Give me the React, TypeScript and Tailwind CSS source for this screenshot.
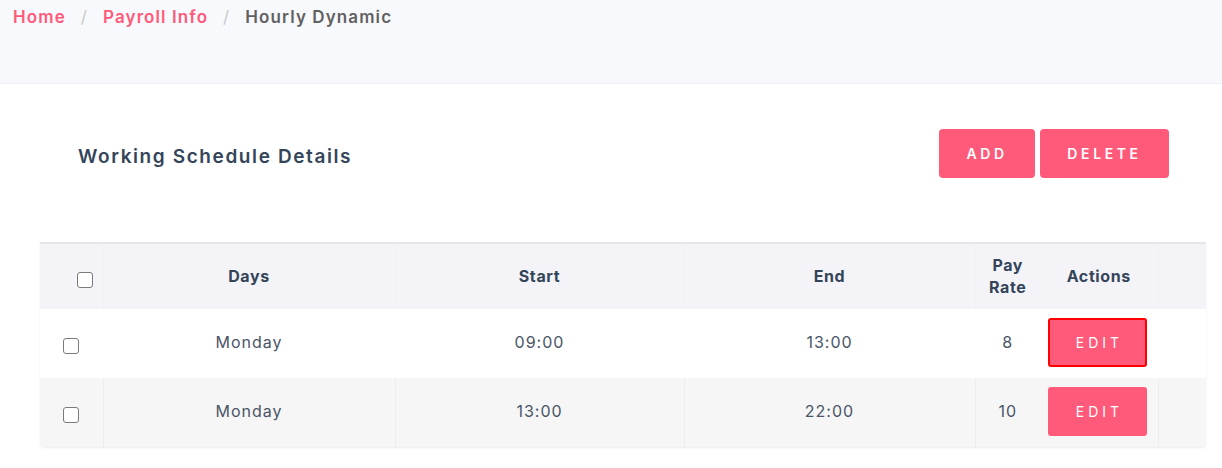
import React from "react";

const rows = [
  { day: "Monday", start: "09:00", end: "13:00", rate: "8", focused: true },
  { day: "Monday", start: "13:00", end: "22:00", rate: "10", focused: false },
];

const Checkbox = ({ className = "" }: { className?: string }) => (
  <span className={`inline-block w-4 h-4 rounded-[3px] border-[1.5px] border-[#7a7a7a] bg-white align-middle ${className}`} />
);

const App = () => {
  return (
    <div className="w-[1222px] h-[468px] bg-white overflow-hidden font-['Inter','Liberation_Sans',sans-serif]">
      <div className="h-[84px] bg-[#f8f9fc] border-b border-[#eeeff3] px-[13px] pt-[5px]">
        <nav className="flex items-center text-[17px] font-semibold tracking-[1.1px]">
          <span className="text-[#ff5a79]">Home</span>
          <span className="text-[#c9c9c9] font-normal mx-[15px]">/</span>
          <span className="text-[#ff5a79]">Payroll Info</span>
          <span className="text-[#c9c9c9] font-normal mx-[15px]">/</span>
          <span className="text-[#616161]">Hourly Dynamic</span>
        </nav>
      </div>

      <div className="flex items-center justify-between pl-[78px] pr-[53px] pt-[45px]">
        <h2 className="text-[19px] font-semibold text-[#34455a] tracking-[1.6px] mt-[7px]">Working Schedule Details</h2>
        <div className="flex gap-[5px]">
          <button className="w-[96px] h-[49px] rounded-[4px] bg-[#ff5a79] text-white text-[14px] font-semibold tracking-[3.6px]">ADD</button>
          <button className="w-[129px] h-[49px] rounded-[4px] bg-[#ff5a79] text-white text-[14px] font-semibold tracking-[3.6px]">DELETE</button>
        </div>
      </div>

      <div className="ml-[40px] mt-[64px] w-[1166px] border-t-2 border-[#e6e6ea] rounded-b-[4px] shadow-[0_1px_2px_rgba(0,0,0,0.08)] overflow-hidden">
        <table className="w-full table-fixed border-collapse text-[#34455a]">
          <colgroup>
            <col className="w-[63px]" />
            <col className="w-[292px]" />
            <col className="w-[289px]" />
            <col className="w-[291px]" />
            <col className="w-[65px]" />
            <col className="w-[118px]" />
            <col className="w-[48px]" />
          </colgroup>
          <thead>
            <tr className="bg-[#f4f4f8] h-[65px] text-[16px] font-semibold leading-[22px] tracking-[0.6px]">
              <th className="pl-[37px] text-left"><Checkbox className="mt-[4px]" /></th>
              <th className="border-l border-[#f0f0f5] pb-[2px]">Days</th>
              <th className="border-l border-[#f0f0f5] pb-[2px]">Start</th>
              <th className="border-l border-[#f0f0f5] pb-[2px]">End</th>
              <th className="border-l border-[#f0f0f5] px-[6px] pb-[2px]">Pay Rate</th>
              <th className="pb-[2px]">Actions</th>
              <th className="border-l border-[#f0f0f5]"></th>
            </tr>
          </thead>
          <tbody>
            {rows.map((r, i) => {
              const line = i % 2 === 1 ? "border-[#ededed]" : "border-white";
              return (
                <tr key={i} className={`h-[69px] text-[16px] text-[#4a5568] tracking-[1px] ${i % 2 === 1 ? "bg-[#f6f6f6]" : "bg-white"}`}>
                  <td className="pl-[23px]"><Checkbox className="mt-[2px]" /></td>
                  <td className={`text-center border-l pb-[4px] ${line}`}>{r.day}</td>
                  <td className={`text-center border-l pb-[4px] ${line}`}>{r.start}</td>
                  <td className={`text-center border-l pb-[4px] ${line}`}>{r.end}</td>
                  <td className={`text-center border-l pb-[4px] ${line}`}>{r.rate}</td>
                  <td className="pl-[8px] pb-[2px]">
                    <button
                      className={`w-[99px] h-[49px] rounded-[3px] bg-[#ff5a79] text-white text-[14px] font-normal tracking-[4px] pl-[4px] ${r.focused ? "border-2 border-[#ff0000]" : ""}`}
                    >
                      EDIT
                    </button>
                  </td>
                  <td className={`border-l ${line}`}></td>
                </tr>
              );
            })}
          </tbody>
        </table>
      </div>
    </div>
  );
};

export default App;
